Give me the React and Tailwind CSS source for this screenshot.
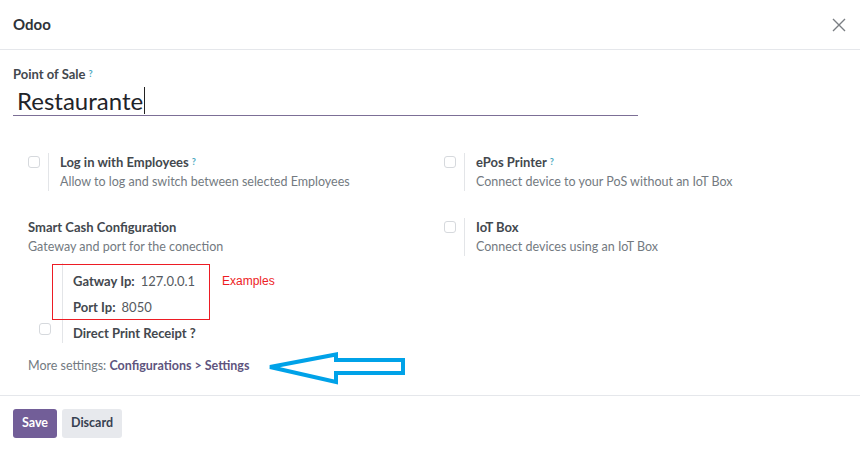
const Check = ({ className = '' }) => (
  <span className={`block w-[12px] h-[12px] rounded-[3px] border border-[#d6d9dd] bg-white ${className}`} />
);

const Help = () => <sup className="text-[9px] font-bold text-[#4aa8c0] ml-[3px] relative -top-[2px]">?</sup>;

const Setting = ({ title, desc, help, checkbox = true }) => (
  <div className="flex">
    <div className="w-[20px] pt-[3px]">{checkbox && <Check />}</div>
    <div className="border-l border-[#e3e5e8] pl-[11px]">
      <div className="text-[13px] font-bold text-[#43484e] leading-[19px]">
        {title}
        {help && <Help />}
      </div>
      <div className="text-[12.5px] text-[#737a81] leading-[19px]">{desc}</div>
    </div>
  </div>
);

const Arrow = () => (
  <svg className="absolute left-[266px] top-[348px]" width="142" height="40" viewBox="266 348 142 40">
    <polygon
      points="270,367 336,354.5 336,360 403,360 403,373 336,373 336,382"
      fill="none"
      stroke="#00a2e8"
      strokeWidth="4"
      strokeLinejoin="miter"
    />
  </svg>
);

export default function App() {
  return (
    <div className="relative w-[860px] h-[449px] bg-white font-['Lato',sans-serif] text-[#374151] overflow-hidden">
      <header className="h-[50px] flex items-center justify-between pl-[13px] pr-[14px] border-b border-[#e5e7eb]">
        <h1 className="text-[15px] font-bold text-[#2f3338]">Odoo</h1>
        <svg width="14" height="14" viewBox="0 0 14 14" className="mt-[1px]">
          <path d="M1 1 L13 13 M13 1 L1 13" stroke="#7a7e83" strokeWidth="1.4" />
        </svg>
      </header>

      <section className="px-[13px] pt-[15px]">
        <label className="block text-[13px] font-bold text-[#43484e] leading-[18px]">
          Point of Sale
          <Help />
        </label>
        <div className="mt-[3px] w-[625px] h-[30px] border-b border-[#7c6f96] flex items-center pl-[4px]">
          <span className="text-[24px] text-[#1f2429] leading-none">Restaurante</span>
          <span className="inline-block w-px h-[27px] bg-[#222] ml-[1px]" />
        </div>
      </section>

      <section className="pl-[28px] pt-[37px] grid grid-cols-[416px_1fr] gap-y-[27px]">
        <Setting title="Log in with Employees" help desc="Allow to log and switch between selected Employees" />
        <Setting title="ePos Printer" help desc="Connect device to your PoS without an IoT Box" />
        <div>
          <div className="text-[13px] font-bold text-[#43484e] leading-[19px]">Smart Cash Configuration</div>
          <div className="text-[12.5px] text-[#737a81] leading-[19px]">Gateway and port for the conection</div>
        </div>
        <Setting title="IoT Box" desc="Connect devices using an IoT Box" />
      </section>

      <section className="relative pl-[28px] mt-[7px]">
        <div className="flex">
          <div className="w-[34px] flex flex-col justify-end pb-[8px] pl-[11px]">
            <Check />
          </div>
          <div className="border-l border-[#e3e5e8] pl-[10px] pt-[5px] text-[13px] leading-[26px] h-[80px]">
            <div>
              <span className="font-bold text-[#43484e]">Gatway Ip:</span>
              <span className="ml-[6px] text-[#555a60]">127.0.0.1</span>
            </div>
            <div>
              <span className="font-bold text-[#43484e]">Port Ip:</span>
              <span className="ml-[6px] text-[#555a60]">8050</span>
            </div>
            <div className="font-bold text-[#43484e]">Direct Print Receipt ?</div>
          </div>
        </div>
        <div className="absolute left-[52px] top-[1px] w-[158px] h-[56px] border border-[#ed1c24]" />
        <span className="absolute left-[222px] top-[9px] text-[12px] text-[#ed1c24] font-['Liberation_Sans',sans-serif]">
          Examples
        </span>
      </section>

      <p className="pl-[28px] mt-[14px] text-[12.5px] leading-[18px] text-[#737a81]">
        More settings: <span className="font-bold text-[#5e547e]">Configurations &gt; Settings</span>
      </p>

      <Arrow />

      <footer className="absolute left-0 right-0 top-[395px] border-t border-[#e5e7eb] pt-[13px] pl-[13px] flex gap-[5px]">
        <button className="h-[29px] w-[44px] rounded-[3px] bg-[#725e98] text-white text-[12.5px] font-bold">Save</button>
        <button className="h-[29px] w-[60px] rounded-[3px] bg-[#e7e9ed] text-[#374151] text-[12.5px] font-bold">Discard</button>
      </footer>
    </div>
  );
}
